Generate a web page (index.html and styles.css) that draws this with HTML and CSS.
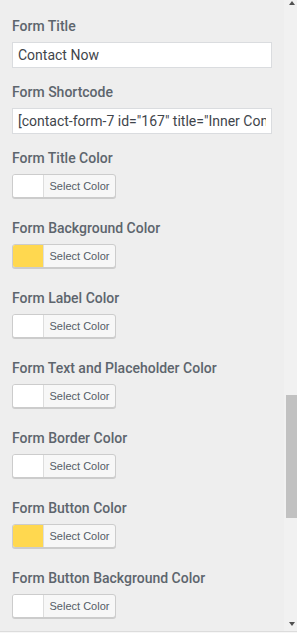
FILE: index.html
```html
<!DOCTYPE html>
<html lang="en">

<head>
    <meta charset="UTF-8">
    <meta name="viewport" content="width=device-width, initial-scale=1.0">
    <title>Form Settings</title>
    <link rel="stylesheet" href="styles.css">
</head>

<body>
    <div class="panel">
        <div class="controls">
            <div class="field text-field">
                <label class="field-label">Form Title</label>
                <input class="text-input" type="text" value="Contact Now">
            </div>
            <div class="field text-field">
                <label class="field-label">Form Shortcode</label>
                <input class="text-input" type="text" value='[contact-form-7 id="167" title="Inner Contact Form"]'>
            </div>
            <div class="field color-field">
                <label class="field-label">Form Title Color</label>
                <button class="color-button"><span class="swatch"></span><span class="color-text">Select Color</span></button>
            </div>
            <div class="field color-field">
                <label class="field-label">Form Background Color</label>
                <button class="color-button"><span class="swatch swatch-yellow"></span><span class="color-text">Select Color</span></button>
            </div>
            <div class="field color-field">
                <label class="field-label">Form Label Color</label>
                <button class="color-button"><span class="swatch"></span><span class="color-text">Select Color</span></button>
            </div>
            <div class="field color-field">
                <label class="field-label">Form Text and Placeholder Color</label>
                <button class="color-button"><span class="swatch"></span><span class="color-text">Select Color</span></button>
            </div>
            <div class="field color-field">
                <label class="field-label">Form Border Color</label>
                <button class="color-button"><span class="swatch"></span><span class="color-text">Select Color</span></button>
            </div>
            <div class="field color-field">
                <label class="field-label">Form Button Color</label>
                <button class="color-button"><span class="swatch swatch-yellow"></span><span class="color-text">Select Color</span></button>
            </div>
            <div class="field color-field">
                <label class="field-label">Form Button Background Color</label>
                <button class="color-button"><span class="swatch"></span><span class="color-text">Select Color</span></button>
            </div>
        </div>
        <div class="scrollbar">
            <div class="arrow arrow-up"></div>
            <div class="track track-top"></div>
            <div class="thumb"></div>
            <div class="track track-bottom"></div>
            <div class="arrow arrow-down"></div>
        </div>
    </div>
</body>

</html>
```

FILE: styles.css
```css
body {
    margin: 0;
    font-family: Roboto, "Liberation Sans", sans-serif;
    background-color: #f7f7f7;
}

.panel {
    display: flex;
    height: 631px;
    background-color: #eeeeee;
    border-bottom: 1px solid #dcdcdc;
}

.controls {
    flex: 1;
    min-width: 0;
    padding: 18px 12px 0;
    overflow: hidden;
}

.field-label {
    display: block;
    font-size: 14px;
    line-height: 17px;
    font-weight: 500;
    color: #5d656d;
}

.text-field {
    margin-bottom: 16px;
}

.text-field .field-label {
    margin-bottom: 7px;
}

.color-field {
    margin-bottom: 22px;
}

.color-field .field-label {
    margin-bottom: 7px;
}

.text-input {
    display: block;
    width: 100%;
    height: 26px;
    box-sizing: border-box;
    padding: 0 5px;
    border: 1px solid #dadcdf;
    background-color: white;
    font-family: inherit;
    font-size: 14px;
    color: #3f454b;
    outline: none;
}

.color-button {
    display: flex;
    width: 104px;
    height: 24px;
    padding: 0;
    box-sizing: border-box;
    border: 1px solid #cccccc;
    border-radius: 3px;
    box-shadow: 0 1px 0 #cccccc;
    background-color: #f7f7f7;
    overflow: hidden;
    cursor: pointer;
}

.swatch {
    width: 30px;
    height: 100%;
    background-color: white;
    border-right: 1px solid #dddddd;
}

.swatch-yellow {
    background-color: #ffd84f;
}

.color-text {
    flex: 1;
    font-family: inherit;
    font-size: 11px;
    line-height: 22px;
    color: #555d66;
    text-align: center;
}

.scrollbar {
    width: 13px;
    display: flex;
    flex-direction: column;
    background-color: #f1f1f1;
}

.arrow {
    height: 15px;
    display: flex;
    justify-content: center;
}

.arrow-up::before,
.arrow-down::before {
    content: "";
    width: 0;
    height: 0;
    border-left: 3.5px solid transparent;
    border-right: 3.5px solid transparent;
    margin-left: 2px;
}

.arrow-up::before {
    margin-top: 1px;
    border-bottom: 4px solid #505050;
}

.arrow-down {
    align-items: flex-end;
}

.arrow-down::before {
    margin-bottom: 5px;
    border-top: 4px solid #505050;
}

.track-top {
    height: 380px;
}

.thumb {
    height: 123px;
    margin-left: 2px;
    background-color: #c1c1c1;
}

.track-bottom {
    flex: 1;
}
```
